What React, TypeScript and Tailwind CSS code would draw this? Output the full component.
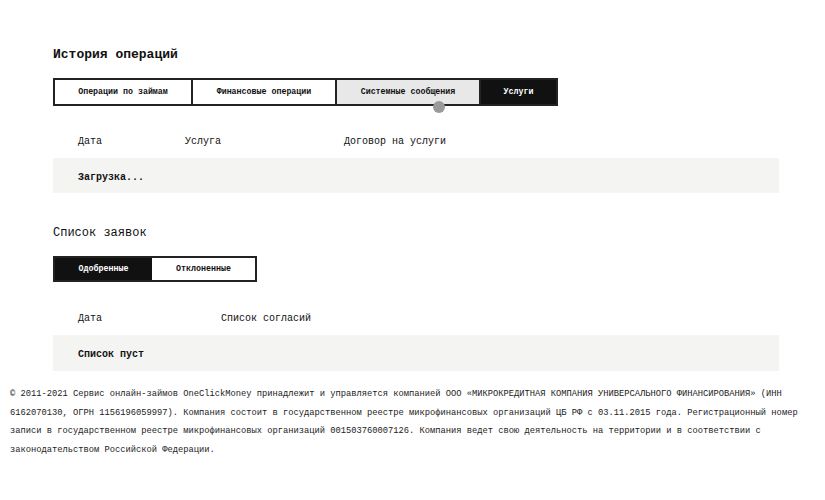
import React from 'react'

const tabs = [
  { label: 'Операции по займам', w: 'w-[138px]', cls: 'bg-white text-[#111]' },
  { label: 'Финансовые операции', w: 'w-[144px]', cls: 'bg-white text-[#111]' },
  { label: 'Системные сообщения', w: 'w-[144px]', cls: 'bg-[#e8e8e8] text-[#111]' },
  { label: 'Услуги', w: 'w-[75px]', cls: 'bg-[#111] text-white' },
]

const App = () => {
  return (
    <div className="w-[825px] h-[500px] bg-white text-[#111] font-['Liberation_Mono','DejaVu_Sans_Mono',monospace] overflow-hidden">
      <div className="pl-[53px] pr-[46px] pt-[46px]">
        <h2 className="text-[13px] font-bold leading-[18px]">История операций</h2>

        <div className="relative mt-[14px] flex w-fit border-2 border-[#222]">
          {tabs.map((t, i) => (
            <div
              key={t.label}
              className={`${t.w} ${t.cls} h-[24px] flex items-center justify-center text-[8.3px] font-bold ${i < tabs.length - 1 ? 'border-r-2 border-[#222]' : ''}`}
            >
              {t.label}
            </div>
          ))}
          <span className="absolute left-[378px] top-[21px] w-[12px] h-[12px] rounded-full bg-[#9a9a9a]" />
        </div>

        <div className="mt-[18px] h-[34px] flex items-center text-[10px] pl-[25px]">
          <span className="w-[107px]">Дата</span>
          <span className="w-[159px]">Услуга</span>
          <span>Договор на услуги</span>
        </div>
        <div className="h-[35px] bg-[#f4f4f2] flex items-center pl-[25px] pt-[3px] text-[10px] font-bold">
          Загрузка...
        </div>

        <h3 className="mt-[32px] text-[12px] leading-[16px]">Список заявок</h3>

        <div className="mt-[15px] flex w-fit border-2 border-[#222]">
          <div className="w-[97px] h-[22px] bg-[#111] text-white flex items-center justify-center text-[8.3px] font-bold">
            Одобренные
          </div>
          <div className="w-[103px] h-[22px] bg-white flex items-center justify-center text-[8.3px] font-bold">
            Отклоненные
          </div>
        </div>

        <div className="mt-[19px] h-[34px] flex items-center text-[10px] pl-[25px]">
          <span className="w-[143px]">Дата</span>
          <span>Список согласий</span>
        </div>
        <div className="h-[36px] bg-[#f4f4f2] flex items-center pl-[25px] pt-[3px] text-[10px] font-bold">
          Список пуст
        </div>
      </div>

      <p className="mt-[14px] px-[10px] text-[8.75px] leading-[18.7px] text-[#222]">
        © 2011-2021 Сервис онлайн-займов OneClickMoney принадлежит и управляется компанией ООО «МИКРОКРЕДИТНАЯ КОМПАНИЯ УНИВЕРСАЛЬНОГО ФИНАНСИРОВАНИЯ» (ИНН 6162070130, ОГРН 1156196059997). Компания состоит в государственном реестре микрофинансовых организаций ЦБ РФ с 03.11.2015 года. Регистрационный номер записи в государственном реестре микрофинансовых организаций 001503760007126. Компания ведет свою деятельность на территории и в соответствии с законодательством Российской Федерации.
      </p>
    </div>
  )
}

export default App
